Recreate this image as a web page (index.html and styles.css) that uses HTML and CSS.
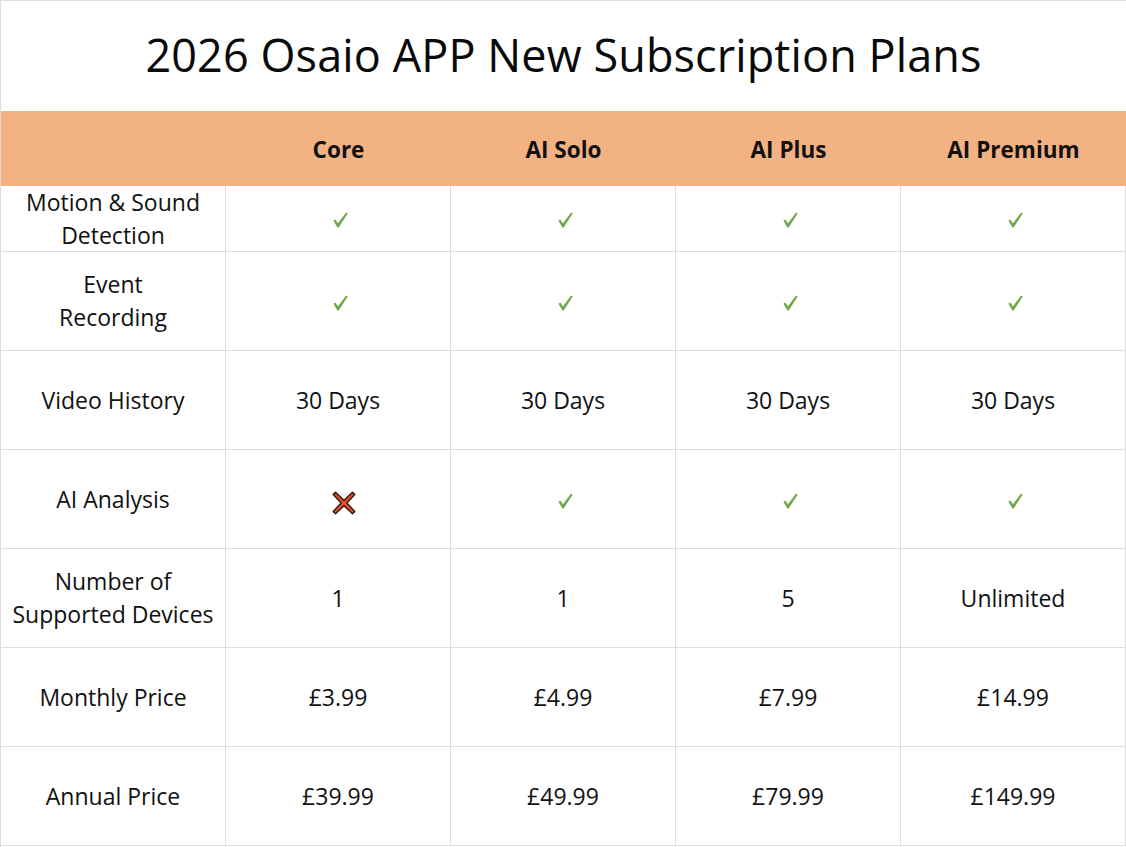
FILE: index.html
```html
<!DOCTYPE html>
<html lang="en">
<head>
<meta charset="utf-8">
<title>2026 Osaio APP New Subscription Plans</title>
<link rel="stylesheet" href="styles.css">
</head>
<body>
<div class="sheet">
  <h1 class="title">2026 Osaio APP New Subscription Plans</h1>
  <div class="grid">
    <div class="hd"></div>
    <div class="hd">Core</div>
    <div class="hd">AI Solo</div>
    <div class="hd">AI Plus</div>
    <div class="hd">AI Premium</div>

    <div class="c">Motion &amp; Sound<br>Detection</div>
    <div class="c"><svg class="ok" viewBox="0 0 15 16" width="15" height="16"><path d="M0.4 8.8 L2.2 7.4 L5 11.2 L13.1 0.5 L14.7 1.6 L5.7 15.5 L4.4 15.5 Z" fill="#72a84c"/></svg></div>
    <div class="c"><svg class="ok" viewBox="0 0 15 16" width="15" height="16"><path d="M0.4 8.8 L2.2 7.4 L5 11.2 L13.1 0.5 L14.7 1.6 L5.7 15.5 L4.4 15.5 Z" fill="#72a84c"/></svg></div>
    <div class="c"><svg class="ok" viewBox="0 0 15 16" width="15" height="16"><path d="M0.4 8.8 L2.2 7.4 L5 11.2 L13.1 0.5 L14.7 1.6 L5.7 15.5 L4.4 15.5 Z" fill="#72a84c"/></svg></div>
    <div class="c"><svg class="ok" viewBox="0 0 15 16" width="15" height="16"><path d="M0.4 8.8 L2.2 7.4 L5 11.2 L13.1 0.5 L14.7 1.6 L5.7 15.5 L4.4 15.5 Z" fill="#72a84c"/></svg></div>

    <div class="c">Event<br>Recording</div>
    <div class="c"><svg class="ok" viewBox="0 0 15 16" width="15" height="16"><path d="M0.4 8.8 L2.2 7.4 L5 11.2 L13.1 0.5 L14.7 1.6 L5.7 15.5 L4.4 15.5 Z" fill="#72a84c"/></svg></div>
    <div class="c"><svg class="ok" viewBox="0 0 15 16" width="15" height="16"><path d="M0.4 8.8 L2.2 7.4 L5 11.2 L13.1 0.5 L14.7 1.6 L5.7 15.5 L4.4 15.5 Z" fill="#72a84c"/></svg></div>
    <div class="c"><svg class="ok" viewBox="0 0 15 16" width="15" height="16"><path d="M0.4 8.8 L2.2 7.4 L5 11.2 L13.1 0.5 L14.7 1.6 L5.7 15.5 L4.4 15.5 Z" fill="#72a84c"/></svg></div>
    <div class="c"><svg class="ok" viewBox="0 0 15 16" width="15" height="16"><path d="M0.4 8.8 L2.2 7.4 L5 11.2 L13.1 0.5 L14.7 1.6 L5.7 15.5 L4.4 15.5 Z" fill="#72a84c"/></svg></div>

    <div class="c">Video History</div>
    <div class="c">30 Days</div>
    <div class="c">30 Days</div>
    <div class="c">30 Days</div>
    <div class="c">30 Days</div>

    <div class="c">AI Analysis</div>
    <div class="c"><svg class="no" viewBox="0 0 24 24" width="24" height="24"><path d="M3.5 1.2 L12 9.2 L20.5 1.2 L22.8 3.5 L14.8 12 L22.8 20.5 L20.5 22.8 L12 14.8 L3.5 22.8 L1.2 20.5 L9.2 12 L1.2 3.5 Z" fill="#e0502c" stroke="#3a1a10" stroke-width="1.4" stroke-linejoin="round"/></svg></div>
    <div class="c"><svg class="ok" viewBox="0 0 15 16" width="15" height="16"><path d="M0.4 8.8 L2.2 7.4 L5 11.2 L13.1 0.5 L14.7 1.6 L5.7 15.5 L4.4 15.5 Z" fill="#72a84c"/></svg></div>
    <div class="c"><svg class="ok" viewBox="0 0 15 16" width="15" height="16"><path d="M0.4 8.8 L2.2 7.4 L5 11.2 L13.1 0.5 L14.7 1.6 L5.7 15.5 L4.4 15.5 Z" fill="#72a84c"/></svg></div>
    <div class="c"><svg class="ok" viewBox="0 0 15 16" width="15" height="16"><path d="M0.4 8.8 L2.2 7.4 L5 11.2 L13.1 0.5 L14.7 1.6 L5.7 15.5 L4.4 15.5 Z" fill="#72a84c"/></svg></div>

    <div class="c">Number of<br>Supported Devices</div>
    <div class="c">1</div>
    <div class="c">1</div>
    <div class="c">5</div>
    <div class="c">Unlimited</div>

    <div class="c">Monthly Price</div>
    <div class="c">£3.99</div>
    <div class="c">£4.99</div>
    <div class="c">£7.99</div>
    <div class="c">£14.99</div>

    <div class="c">Annual Price</div>
    <div class="c">£39.99</div>
    <div class="c">£49.99</div>
    <div class="c">£79.99</div>
    <div class="c">£149.99</div>
  </div>
</div>
</body>
</html>
```
FILE: styles.css
```css
* { box-sizing: border-box; }
html, body { margin: 0; padding: 0; background: #fff; }
body {
  font-family: "Open Sans", "Noto Sans", "Liberation Sans", sans-serif;
  color: #111;
}
.sheet {
  width: 1126px;
  height: 847px;
  border-top: 1px solid #dcdcdc;
  border-left: 1px solid #dcdcdc;
  overflow: hidden;
}
.title {
  margin: 0;
  height: 110px;
  display: flex;
  align-items: center;
  justify-content: center;
  font-weight: 400;
  font-size: 45px;
  letter-spacing: 0.1px;
  padding-bottom: 3px;
  color: #0a0a0a;
}
.grid {
  display: grid;
  grid-template-columns: repeat(5, 225px);
  grid-template-rows: 75px 66px repeat(6, 99px);
}
.hd {
  background: #f3b283;
  display: flex;
  align-items: center;
  justify-content: center;
  font-weight: 700;
  font-size: 22.5px;
  padding-top: 2px;
  color: #111;
}
.c {
  display: flex;
  align-items: center;
  justify-content: center;
  text-align: center;
  font-size: 23px;
  line-height: 33px;
  border-right: 1px solid #dedede;
  border-bottom: 1px solid #dedede;
  color: #111;
}
.ok { display: block; margin-left: 4px; margin-top: 3px; }
.no { display: block; margin-left: 11px; margin-top: 8px; }
```
